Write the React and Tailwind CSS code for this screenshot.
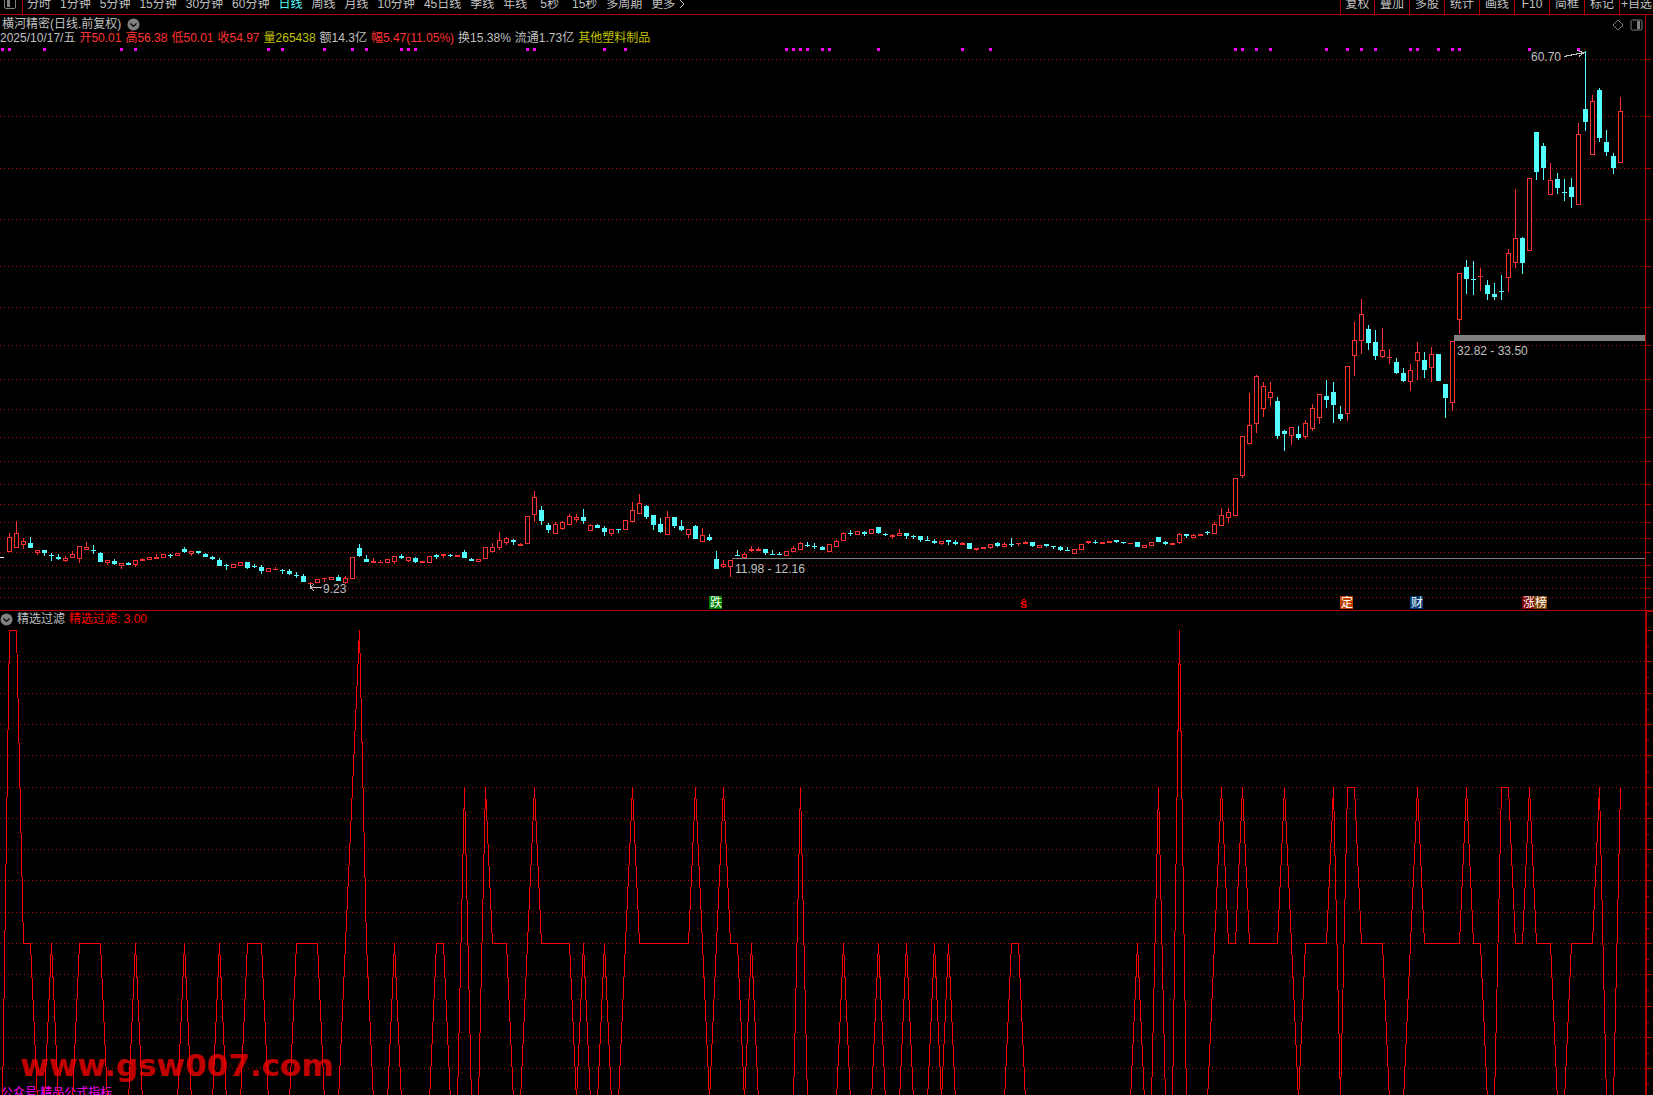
import React, { useState } from "react";

const PERIODS = [
    "分时", "1分钟", "5分钟", "15分钟", "30分钟", "60分钟", "日线", "周线", "月线",
    "10分钟", "45日线", "季线", "年线", "5秒", "15秒", "多周期",
];

const TOOLS = ["复权", "叠加", "多股", "统计", "画线", "F10", "简框", "标记", "+自选"];

const QUOTE = [
    { text: "2025/10/17/五", color: "text-[#c0c0c0]" },
    { text: "开50.01", color: "text-[#ff3232]" },
    { text: "高56.38", color: "text-[#ff3232]" },
    { text: "低50.01", color: "text-[#ff3232]" },
    { text: "收54.97", color: "text-[#ff3232]" },
    { text: "量265438", color: "text-[#c0c000]" },
    { text: "额14.3亿", color: "text-[#c0c0c0]" },
    { text: "幅5.47(11.05%)", color: "text-[#ff3232]" },
    { text: "换15.38%", color: "text-[#c0c0c0]" },
    { text: "流通1.73亿", color: "text-[#c0c0c0]" },
    { text: "其他塑料制品", color: "text-[#c0c000]" },
];

// Top of each pane's drawing area and of its axis, in chart units
const PRICE_TOP = 45;
const PRICE_AXIS_TOP = 15;
const SIGNAL_TOP = 628;
const SIGNAL_AXIS_TOP = 611;

const PRICE_GRID = [
    59, 116, 168, 219, 266, 307, 345, 379, 409, 437, 461, 484,
    504, 522, 538, 552, 565, 577, 588, 597,
];
const SIGNAL_GRID = [661, 693, 724, 755, 787, 818, 849, 880, 912, 943, 974, 1006, 1037, 1068];
const SIGNAL_MINOR = [646, 677, 709, 740, 771, 803, 834, 865, 896, 928, 959, 990, 1022, 1053, 1084];

// Signal level (0-3) -> y
const LEVEL_Y = [1100, 943, 787, 630];

// Bars marked with a dot above the chart
const DOTS = [
    0, 1, 6, 17, 19, 38, 40, 46, 50, 52, 57, 58, 59, 75, 76, 86, 89, 112, 113, 114, 115,
    117, 118, 125, 137, 141, 176, 177, 179, 181, 189, 192, 194, 196, 201, 202, 205, 207,
    208, 218, 225,
];

// r = rising, f = falling; high, body top, body bottom, low. First one is bar 1
const CANDLES = `
r533,537,552,552 r521,533,548,548 r538,541,545,549 f537,543,548,548 r550,550,553,555
f550,550,553,556 f553,555,556,561 f554,557,559,560 r556,558,561,562 r551,554,558,558
r546,546,559,563 r542,547,550,550 f545,550,551,554 f552,553,562,562 r560,560,563,565
f559,561,564,565 r563,563,566,569 f562,563,565,565 r560,560,565,567 r558,559,561,561
r557,557,560,560 r554,557,559,559 r554,554,558,558 f554,555,556,558 r553,553,556,556
f547,549,552,553 r551,551,554,556 f551,551,553,554 f553,554,557,557 f556,557,559,560
f558,560,566,566 f564,565,566,570 r564,564,568,568 r562,562,566,566 f562,562,568,569
f564,566,567,568 f565,567,571,574 r568,568,572,572 r567,569,570,570 f569,570,571,574
f569,571,574,575 f572,575,576,578 f574,576,582,582 r582,583,584,586 r579,579,583,583
r578,578,579,582 r577,577,580,580 f575,577,581,581 r576,578,583,584 r557,557,579,579
f544,548,556,557 f555,559,562,562 r558,561,563,563 r560,562,563,563 r559,559,563,563
r556,556,562,564 f554,556,558,559 r557,557,561,562 f557,558,562,563 r561,561,563,563
r556,556,563,563 f554,555,557,559 r554,554,556,558 f554,555,556,557 r555,555,557,557
f550,552,558,558 f558,559,561,561 r559,559,562,562 r547,547,559,559 r543,547,552,553
r532,540,548,550 r537,538,543,545 f539,540,542,545 r543,544,546,546 r516,516,544,544
r491,497,515,522 f506,510,521,525 f523,525,530,533 r522,524,534,534 r521,522,529,530
r514,516,525,525 r514,517,520,522 f509,517,521,524 r524,525,531,531 f524,525,528,528
f526,528,532,536 r529,529,534,536 f529,529,530,533 r520,520,530,530 r502,510,522,522
r494,503,514,514 f505,506,517,519 f515,515,525,530 f518,524,532,533 r511,517,535,535
f517,517,526,528 f520,526,530,531 r529,529,535,538 f525,526,539,539 r528,535,542,542
f534,537,540,541 f551,559,569,569 r560,564,567,568 r560,560,567,577 f550,555,556,556
r552,554,558,558 r546,549,551,552 r547,549,551,551 f549,549,553,555 f550,554,555,555
f552,554,555,555 r551,551,556,556 r546,548,552,552 r542,543,550,550 f542,545,546,547
f543,546,547,549 f546,547,550,550 r544,544,552,552 r540,541,547,547 r532,533,541,541
f530,533,534,536 r531,531,535,535 f531,532,534,536 r529,529,534,534 f527,527,533,534
f533,534,535,536 r534,535,537,539 r529,533,536,536 f533,533,536,539 f535,536,537,539
f536,536,540,542 f536,540,541,541 f539,541,543,544 r541,541,544,545 f540,540,542,545
f540,542,544,545 r542,543,545,545 f543,543,549,549 r548,548,550,551 r547,547,549,549
r544,544,548,549 f542,543,546,547 r542,544,547,547 f538,544,545,547 r543,543,544,546
r541,542,544,544 f542,542,546,547 r545,545,548,548 f544,544,546,547 f546,546,547,549
f546,547,550,551 f547,550,551,551 r549,549,554,554 r544,544,550,550 r541,541,543,544
f540,542,543,544 r542,542,544,544 r541,541,543,543 f540,540,542,543 f542,542,543,544
r543,543,544,544 f542,542,547,547 r545,545,548,548 r542,542,546,546 f537,537,542,542
f541,542,544,545 r543,543,545,545 r533,534,543,544 f534,534,536,538 r534,535,538,538
r534,534,536,536 f531,532,533,535 r522,524,534,534 r508,515,526,526 r508,512,518,523
r478,478,516,516 r436,436,476,478 r393,425,444,444 r375,376,424,433 r382,386,409,417
r382,392,398,406 f397,401,436,439 f430,431,434,451 r427,427,436,445 f426,434,438,440
r420,423,437,439 r404,408,429,431 r394,394,418,424 f380,396,400,408 f382,392,405,423
f406,414,419,421 r366,366,414,421 r322,340,356,376 r299,314,341,354 f325,329,343,350
f330,342,356,360 r328,350,357,358 r349,357,358,364 f358,362,373,374 f368,373,381,382
r364,370,382,391 r342,352,361,380 f352,360,370,378 r347,354,368,382 f354,354,381,381
f384,384,398,418 r341,341,403,411 r273,273,320,334 f260,267,279,294 f261,279,280,295
r268,276,277,291 f280,285,294,300 f283,294,297,300 f275,291,292,300 r249,253,278,292
r189,238,263,268 f237,238,263,274 r178,178,251,251 f132,132,172,180 f143,146,168,180
r163,180,195,195 f173,179,188,194 f179,192,193,201 f178,187,197,208 r123,134,205,205
f51,109,122,131 r95,101,155,155 f88,90,138,142 f130,142,152,156 f153,156,168,174
r97,111,163,163
`
    .trim()
    .split(/\s+/)
    .map((c) => ({ rising: c[0] === "r", values: c.slice(1).split(",").map(Number) }));

// Start bar and the levels from there on; all other bars are 0
const SIGNALS = [
    [1, "3311"], [7, "1"], [11, "1111"], [19, "1"], [26, "1"], [31, "1"], [35, "111"],
    [42, "1111"], [49, "123"], [52, "1"], [56, "1"], [62, "11"], [66, "2"], [69, "2111"],
    [75, "1211111"], [83, "1"], [86, "1"], [89, "121111111121"], [102, "1211"], [107, "1"],
    [114, "2"], [120, "1"], [125, "1"], [129, "1"], [133, "1"], [135, "1"], [144, "11"],
    [162, "1"], [165, "2"], [168, "3"], [173, "121121111121"], [186, "11112"],
    [192, "221111"], [201, "12111111211"], [214, "22112111"], [224, "11112"], [231, "2"],
];

const BADGES = [
    { text: "跌", x: 709, fill: "#008000" },
    { text: "定", x: 1340, fill: "#c04000" },
    { text: "财", x: 1410, fill: "#003870" },
    { text: "涨", x: 1522, fill: "#800000" },
    { text: "榜", x: 1534, fill: "#804000" },
];

const barX = (i) => 2 + 7 * i + (i >= 117 ? 1 : 0);

const signalPoints = () => {
    const levels = new Array(232).fill(0);
    SIGNALS.forEach(([start, run]) => {
        [...run].forEach((level, k) => {
            levels[start + k] = Number(level);
        });
    });
    return levels.map((level, i) => `${barX(i)},${LEVEL_Y[level]}`).join(" ");
};

const GridLines = ({ rows }) =>
    rows.map((y) => (
        <line
            key={y}
            x1="0"
            x2="100%"
            y1={y + 0.5}
            y2={y + 0.5}
            stroke="#b00000"
            strokeDasharray="1 3"
        />
    ));

const Candle = ({ x, rising, values }) => {
    const [high, top, bottom, low] = values;
    const color = rising ? "#ff3232" : "#54ffff";
    return (
        <g fill={color}>
            <rect x={x} y={high} width="1" height={low - high} />
            <rect x={x - 2} y={top} width="5" height={bottom - top} />
            {rising && bottom - top > 2 && (
                <rect x={x - 1} y={top + 1} width="3" height={bottom - top - 2} fill="#000" />
            )}
        </g>
    );
};

const PriceChart = () => (
    <svg className="block w-full flex-1 min-h-0" shapeRendering="crispEdges">
        <g transform={`translate(0 ${-PRICE_TOP})`}>
            <GridLines rows={PRICE_GRID} />
            {DOTS.map((i) => (
                <rect key={i} x={barX(i) - 1} y="48" width="3" height="3" fill="#ff00ff" />
            ))}

            {/* Gaps still open */}
            <line x1="732" x2="100%" y1="558.5" y2="558.5" stroke="#808080" />
            <line x1="1454" x2="100%" y1="338" y2="338" stroke="#808080" strokeWidth="6" />

            <rect x="0" y="557" width="4" height="1" fill="#fff" />
            {CANDLES.map((c, i) => (
                <Candle key={i} x={barX(i + 1)} rising={c.rising} values={c.values} />
            ))}

            {/* Highest and lowest price */}
            <g stroke="#c0c0c0" fill="none">
                <path d="M1564 56.5 L1584 52.5 M1577 50.5 L1584 52.5 L1579 56.5" />
                <path d="M310 587.5 H322 M310 584 V589 M310 587.5 L314 584.5 M310 587.5 L314 591" />
            </g>
            <g fill="#c0c0c0" className="text-[12px]">
                <text x="1531" y="61">60.70</text>
                <text x="323" y="593">9.23</text>
                <text x="1457" y="355">32.82 - 33.50</text>
                <text x="735" y="573">11.98 - 12.16</text>
            </g>

            {BADGES.map((b) => (
                <g key={b.text}>
                    <rect x={b.x} y="596" width="13" height="13" fill={b.fill} />
                    <text x={b.x + 1} y="607" fill="#fff" className="text-[12px]">{b.text}</text>
                </g>
            ))}
            <text x="1020" y="608" fill="#ff0000" className="text-[13px] font-bold">ŝ</text>
        </g>
    </svg>
);

const SignalChart = () => (
    <svg className="relative block w-full flex-1 min-h-0" shapeRendering="crispEdges">
        <g transform={`translate(0 ${-SIGNAL_TOP})`}>
            <GridLines rows={SIGNAL_GRID} />
            <g transform="translate(0.5 0.5)">
                <polyline points={signalPoints()} fill="none" stroke="#ff0000" />
            </g>
        </g>
    </svg>
);

const Axis = ({ top, major, minor = [] }) => (
    <svg className="block w-full h-full" shapeRendering="crispEdges" fill="#b00000">
        <g transform={`translate(0 ${-top})`}>
            {major.map((y) => (
                <rect key={y} x="0" y={y} width="5" height="1" />
            ))}
            {minor.map((y) => (
                <rect key={y} x="0" y={y} width="2" height="1" />
            ))}
        </g>
    </svg>
);

const CollapseButton = ({ label }) => (
    <button type="button" aria-label={label} className="shrink-0">
        <svg width="13" height="13" viewBox="0 0 13 13" className="block">
            <circle cx="6.5" cy="6.5" r="6" fill="#808080" />
            <path d="M3.5 5.5 L6.5 8.5 L9.5 5.5" fill="none" stroke="#000" strokeWidth="1.2" />
        </svg>
    </button>
);

const Toolbar = () => {
    const [period, setPeriod] = useState("日线");

    return (
        <header className="flex h-[15px] shrink-0 border-b border-[#b00000] leading-[8px] overflow-hidden">
            <button
                type="button"
                aria-label="侧栏"
                className="flex items-start w-[23px] shrink-0 border-r border-[#b00000] pl-1"
            >
                <svg width="12" height="14" viewBox="0 0 12 14" className="block">
                    <rect x="0.5" y="-3" width="11" height="11.5" rx="1.5" fill="none" stroke="#808080" />
                    <rect x="3" y="0" width="3" height="7" fill="#808080" />
                </svg>
            </button>
            <nav className="flex items-start gap-[9px] pl-1 whitespace-nowrap">
                {PERIODS.map((p) => (
                    <button
                        key={p}
                        type="button"
                        onClick={() => setPeriod(p)}
                        className={`${p === period ? "text-[#54ffff]" : ""} ${p.endsWith("秒") ? "pl-1" : ""}`}
                    >
                        {p}
                    </button>
                ))}
                <button type="button" className="flex items-start gap-1">
                    更多
                    <svg width="6" height="9" viewBox="0 0 6 9" className="block">
                        <path d="M1 0 L5 4 L1 8" fill="none" stroke="#c0c0c0" />
                    </svg>
                </button>
            </nav>
            <div className="flex ml-auto">
                {TOOLS.map((t) => (
                    <button
                        key={t}
                        type="button"
                        className="flex items-start justify-center w-[35px] border-l border-[#b00000] whitespace-nowrap first:w-[34px] last:w-[34px]"
                    >
                        {t}
                    </button>
                ))}
            </div>
        </header>
    );
};

const App = () => {
    return (
        <div className="flex flex-col h-screen overflow-hidden bg-black text-[#c0c0c0] text-[12px] font-['Liberation_Sans','Noto_Sans_CJK_SC',sans-serif]">
            <Toolbar />

            {/* K线 */}
            <section className="flex h-[596px] shrink-0 border-b border-[#b00000]">
                <div className="flex flex-col flex-1 min-w-0">
                    <div className="flex items-center h-[17px] shrink-0 pt-[2px] px-[2px] leading-[15px]">
                        <h1>横河精密(日线.前复权)</h1>
                        <div className="flex ml-[6px]">
                            <CollapseButton label="收起主图" />
                        </div>
                        <div className="flex gap-[6px] ml-auto">
                            <button type="button" aria-label="标记">
                                <svg width="12" height="12" viewBox="0 0 12 12" className="block">
                                    <path d="M6 1 L11 6 L6 11 L1 6 Z" fill="none" stroke="#808080" />
                                </svg>
                            </button>
                            <button type="button" aria-label="右侧栏">
                                <svg width="13" height="12" viewBox="0 0 13 12" className="block">
                                    <rect x="1" y="1" width="11" height="10" rx="1.5" fill="none" stroke="#808080" />
                                    <rect x="7" y="2" width="3" height="8" fill="#808080" />
                                </svg>
                            </button>
                        </div>
                    </div>
                    <div className="flex gap-1 h-[13px] shrink-0 leading-[12px] whitespace-nowrap">
                        {QUOTE.map((q) => (
                            <span key={q.text} className={q.color}>{q.text}</span>
                        ))}
                    </div>
                    <PriceChart />
                </div>
                <div className="w-[8px] shrink-0 border-l border-[#b00000]">
                    <Axis top={PRICE_AXIS_TOP} major={PRICE_GRID} />
                </div>
            </section>

            {/* 指标 */}
            <section className="flex flex-1 min-h-0">
                <div className="relative flex flex-col flex-1 min-w-0 overflow-hidden">
                    <div className="flex items-center h-[17px] shrink-0 leading-[17px]">
                        <CollapseButton label="收起指标" />
                        <h2 className="pl-1">精选过滤</h2>
                        <span className="pl-1 text-[#ff0000]">精选过滤: 3.00</span>
                    </div>
                    <div className="absolute left-[20px] bottom-[12px] text-[31px] leading-[36px] font-bold text-[#c00000] font-['DejaVu_Sans',sans-serif]">
                        www.gsw007.com
                    </div>
                    <div className="absolute left-px -bottom-[5px] leading-[14px] text-[#ff00ff]">
                        公众号:精品公式指标
                    </div>
                    <SignalChart />
                </div>
                <div className="w-[8px] shrink-0 border-l-2 border-t border-[#b00000]">
                    <Axis top={SIGNAL_AXIS_TOP + 1} major={[630, ...SIGNAL_GRID]} minor={SIGNAL_MINOR} />
                </div>
            </section>
        </div>
    );
};

export default App;
